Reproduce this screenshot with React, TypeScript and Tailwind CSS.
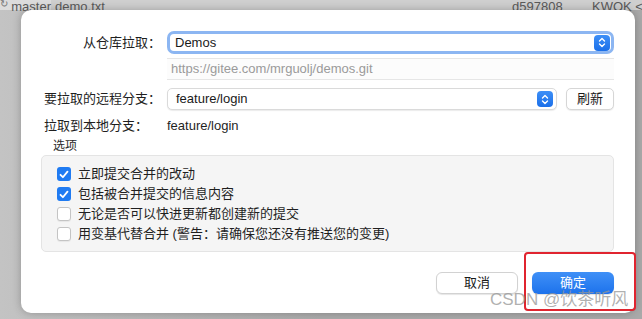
import React from "react";

const font = {
  fontFamily:
    '"Liberation Sans", "Noto Sans CJK SC", Arial, sans-serif',
};

function Stepper() {
  return (
    <div className="flex h-[16px] w-[16px] items-center justify-center rounded-[4px] bg-gradient-to-b from-[#3d8ff7] to-[#1a6fe9]">
      <svg width="8" height="11" viewBox="0 0 8 11" fill="none">
        <path d="M1.5 4 L4 1.5 L6.5 4" stroke="white" strokeWidth="1.4" strokeLinecap="round" strokeLinejoin="round" />
        <path d="M1.5 7 L4 9.5 L6.5 7" stroke="white" strokeWidth="1.4" strokeLinecap="round" strokeLinejoin="round" />
      </svg>
    </div>
  );
}

function Check({ checked }: { checked: boolean }) {
  if (checked) {
    return (
      <div className="flex h-[14px] w-[14px] items-center justify-center rounded-[3px] bg-[#1f7bf2]">
        <svg width="10" height="9" viewBox="0 0 10 9" fill="none">
          <path d="M1.5 4.8 L3.9 7.2 L8.5 1.6" stroke="white" strokeWidth="1.8" strokeLinecap="round" strokeLinejoin="round" />
        </svg>
      </div>
    );
  }
  return <div className="h-[14px] w-[14px] rounded-[3px] border border-[#c4c4c4] bg-white shadow-[0_1px_1px_rgba(0,0,0,0.06)]" />;
}

export default function App() {
  const options: [boolean, string][] = [
    [true, "立即提交合并的改动"],
    [true, "包括被合并提交的信息内容"],
    [false, "无论是否可以快进更新都创建新的提交"],
    [false, "用变基代替合并 (警告：请确保您还没有推送您的变更)"],
  ];
  return (
    <div
      className="relative h-[319px] w-[642px] overflow-hidden bg-gradient-to-r from-[#c3c3c3] via-[#ababab] to-[#a9a9a9]"
      style={font}
    >
      {/* top strip */}
      <div className="flex h-[10px] items-start bg-[#cfcfcf] text-[13px] leading-[13px] text-[#5a5a5a]">
        <div className="flex h-[10px] w-[51px] shrink-0 items-start bg-[#dcdcdc]">
          <span className="mt-[-2px] w-[12px] text-[10px] leading-[12px] text-[#777]">↻</span>
          <span>master</span>
        </div>
        <span className="ml-[4px] shrink-0">demo.txt</span>
        <span className="absolute left-[512px] top-0">d597808</span>
        <span className="absolute left-[592px] top-0 whitespace-nowrap">KWOK &lt;</span>
      </div>

      {/* dialog */}
      <div className="relative ml-[21px] flex h-[303px] w-[614px] flex-col rounded-[10px] bg-white pl-[20px] pr-[21px] shadow-[0_0_8px_rgba(0,0,0,0.25)]">
        {/* row 1 */}
        <div className="mt-[21px] flex h-[23px] items-center">
          <div className="w-[120px] text-right text-[13px] text-[#1f1f1f]">从仓库拉取：</div>
          <div className="ml-[6px] flex h-[23px] flex-1 items-center rounded-[7px] border-[3px] border-[#8cb6f2] bg-white pl-[5px] pr-[1px]">
            <span className="flex-1 text-[13px] text-[#1a1a1a]">Demos</span>
            <Stepper />
          </div>
        </div>
        {/* url */}
        <div className="mt-[4px] flex h-[22px] items-center">
          <div className="w-[120px]" />
          <div className="ml-[6px] flex h-[22px] flex-1 items-center border-y border-[#e6e6e6] bg-[#fcfcfc] pl-[4px] text-[13px] text-[#9a9a9a]">
            https://gitee.com/mrguolj/demos.git
          </div>
        </div>
        {/* row 3 */}
        <div className="mt-[8px] flex h-[22px] items-center">
          <div className="w-[120px] text-right text-[13px] text-[#1f1f1f]">要拉取的远程分支：</div>
          <div className="ml-[6px] flex h-[22px] w-[390px] items-center rounded-[5px] border border-[#dadada] bg-white pl-[8px] pr-[3px] shadow-[0_1px_1px_rgba(0,0,0,0.08)]">
            <span className="flex-1 text-[13px] text-[#1a1a1a]">feature/login</span>
            <Stepper />
          </div>
          <div className="ml-[9px] flex h-[22px] flex-1 items-center justify-center rounded-[5px] border border-[#d6d6d6] bg-white text-[13px] text-[#1a1a1a] shadow-[0_1px_1px_rgba(0,0,0,0.08)]">
            刷新
          </div>
        </div>
        {/* row 4 */}
        <div className="mt-[6px] flex h-[20px] items-center text-[13px] text-[#1f1f1f]">
          <div className="w-[126px] pl-[3px]">拉取到本地分支：</div>
          <div>feature/login</div>
        </div>
        <div className="mt-[1px] pl-[12px] text-[12px] leading-[18px] text-[#2a2a2a]">选项</div>
        {/* options box */}
        <div className="flex h-[97px] flex-col rounded-[5px] border border-[#e4e4e4] bg-[#f5f5f5] pl-[15px] pt-[8px]">
          {options.map(([c, t], i) => (
            <div key={i} className="flex h-[20px] items-center">
              <Check checked={c} />
              <span className="ml-[7px] text-[13px] text-[#1f1f1f]">{t}</span>
            </div>
          ))}
        </div>
        {/* buttons */}
        <div className="mt-[20px] flex justify-end gap-[14px]">
          <div className="flex h-[22px] w-[82px] items-center justify-center rounded-[6px] border border-[#d2d2d2] bg-white text-[13px] text-[#1a1a1a] shadow-[0_1px_1px_rgba(0,0,0,0.1)]">
            取消
          </div>
          <div className="flex h-[22px] w-[82px] items-center justify-center rounded-[6px] bg-gradient-to-b from-[#3f90f7] to-[#1c72ec] text-[13px] text-white shadow-[0_1px_1px_rgba(0,0,0,0.12)]">
            确定
          </div>
        </div>
      </div>

      {/* red annotation */}
      <div className="absolute left-[524px] top-[252px] h-[59px] w-[112px] rounded-[4px] border-[2px] border-[#e0242f]" />
      {/* watermark */}
      <div className="absolute left-[490px] top-[290px] text-[17px] leading-[19px] text-[rgba(150,150,150,0.75)]">
        CSDN @饮茶听风
      </div>
    </div>
  );
}
